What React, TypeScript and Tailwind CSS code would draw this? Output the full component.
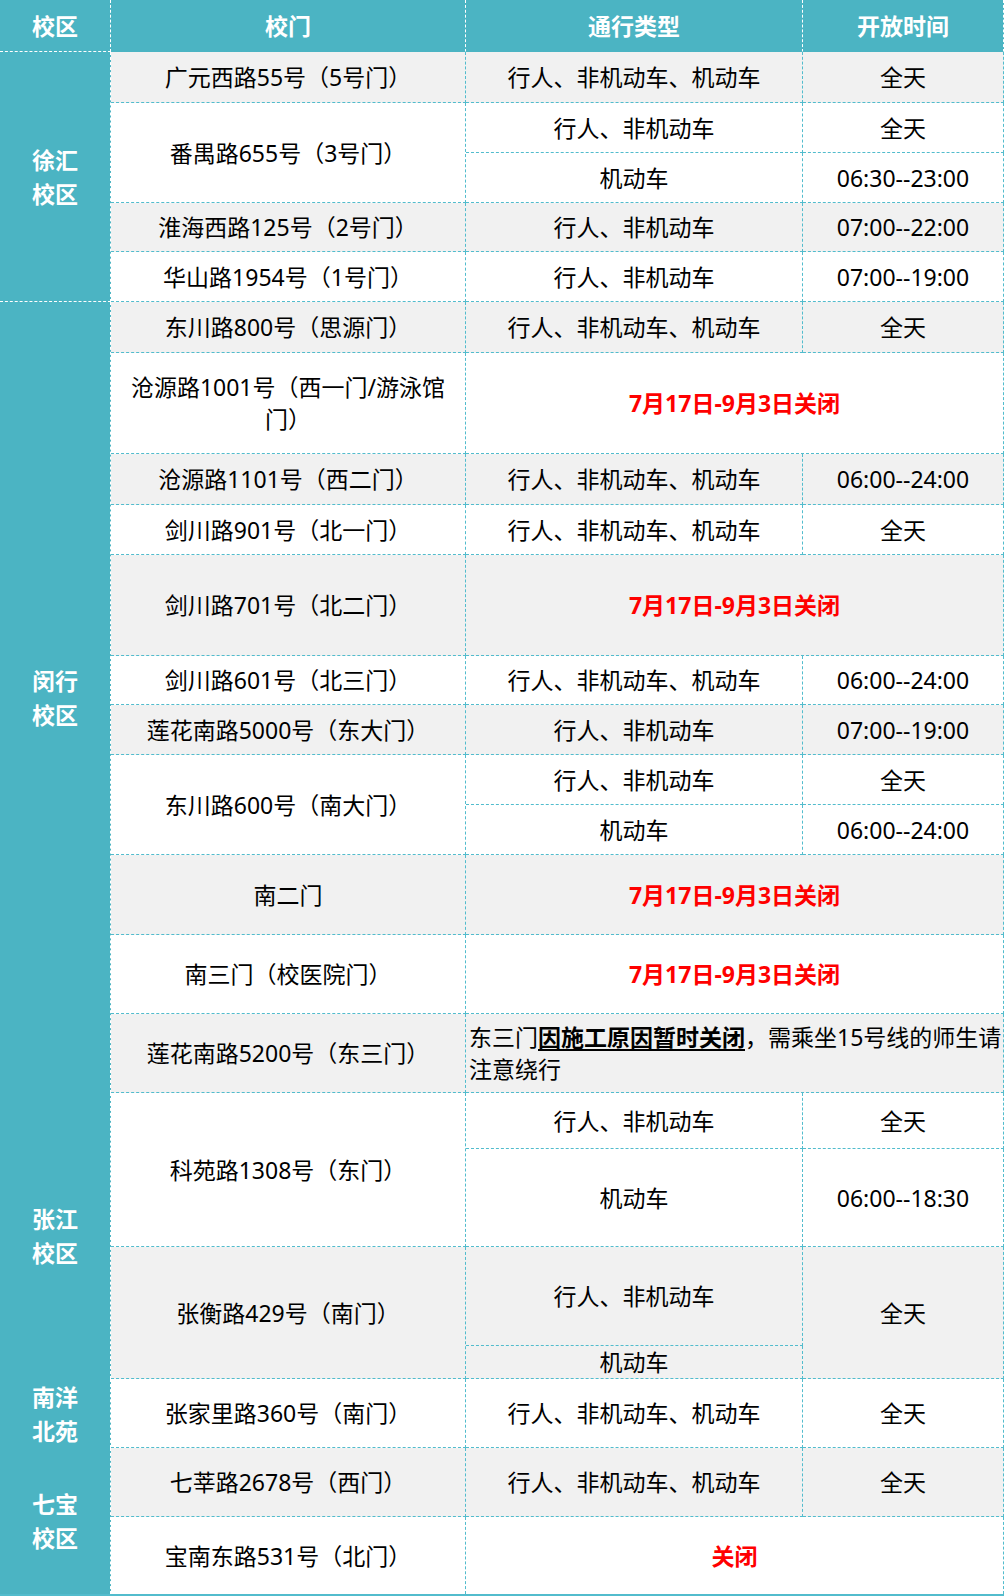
import React from "react";

const TD =
  "border-r border-b border-dashed border-[#52bccd] text-center align-middle px-1 text-[23px] leading-[32px]";
const GRAY = "bg-[#f1f1f1] text-black";
const WHITE = "bg-white text-black";
const GRAYR = "bg-[#f1f1f1] text-[#ff0000] font-bold";
const WHITER = "bg-white text-[#ff0000] font-bold";
const CAMPUS =
  "bg-[#4bb4c3] border-r border-dashed border-r-white text-center align-middle text-white font-bold text-[23px] leading-[34px]";
const TH =
  "bg-[#4bb4c3] text-white font-bold text-[23px] leading-[32px] text-center align-middle border-r border-b border-dashed border-r-white border-b-[#4bb4c3]";

export default function App() {
  return (
    <div className="w-[1004px] h-[1596px] bg-white font-['Noto_Sans','Noto_Sans_CJK_SC',sans-serif]">
      <table className="w-[1004px] table-fixed border-separate border-spacing-0 border-b-2 border-b-[#52bccd]">
        <colgroup>
          <col className="w-[111px]" />
          <col className="w-[355px]" />
          <col className="w-[337px]" />
          <col className="w-[201px]" />
        </colgroup>
        <thead>
          <tr className="h-[52px]">
            <th className={TH + " border-b-white"}>校区</th>
            <th className={TH}>校门</th>
            <th className={TH}>通行类型</th>
            <th className={TH + " border-r-[#52bccd]"}>开放时间</th>
          </tr>
        </thead>
        <tbody>
          {/* 徐汇 */}
          <tr className="h-[51px]">
            <td rowSpan={5} className={CAMPUS + " border-b border-b-white"}>
              徐汇
              <br />
              校区
            </td>
            <td className={TD + " " + GRAY}>广元西路55号（5号门）</td>
            <td className={TD + " " + GRAY}>行人、非机动车、机动车</td>
            <td className={TD + " " + GRAY}>全天</td>
          </tr>
          <tr className="h-[50px]">
            <td rowSpan={2} className={TD + " " + WHITE}>番禺路655号（3号门）</td>
            <td className={TD + " " + WHITE}>行人、非机动车</td>
            <td className={TD + " " + WHITE}>全天</td>
          </tr>
          <tr className="h-[50px]">
            <td className={TD + " " + WHITE}>机动车</td>
            <td className={TD + " " + WHITE}>06:30--23:00</td>
          </tr>
          <tr className="h-[49px]">
            <td className={TD + " " + GRAY}>淮海西路125号（2号门）</td>
            <td className={TD + " " + GRAY}>行人、非机动车</td>
            <td className={TD + " " + GRAY}>07:00--22:00</td>
          </tr>
          <tr className="h-[50px]">
            <td className={TD + " " + WHITE}>华山路1954号（1号门）</td>
            <td className={TD + " " + WHITE}>行人、非机动车</td>
            <td className={TD + " " + WHITE}>07:00--19:00</td>
          </tr>

          {/* 闵行 */}
          <tr className="h-[51px]">
            <td rowSpan={12} className={CAMPUS}>
              闵行
              <br />
              校区
            </td>
            <td className={TD + " " + GRAY}>东川路800号（思源门）</td>
            <td className={TD + " " + GRAY}>行人、非机动车、机动车</td>
            <td className={TD + " " + GRAY}>全天</td>
          </tr>
          <tr className="h-[101px]">
            <td className={TD + " " + WHITE}>
              沧源路1001号（西一门/游泳馆
              <br />
              门）
            </td>
            <td colSpan={2} className={TD + " " + WHITER}>
              7月17日-9月3日关闭
            </td>
          </tr>
          <tr className="h-[51px]">
            <td className={TD + " " + GRAY}>沧源路1101号（西二门）</td>
            <td className={TD + " " + GRAY}>行人、非机动车、机动车</td>
            <td className={TD + " " + GRAY}>06:00--24:00</td>
          </tr>
          <tr className="h-[50px]">
            <td className={TD + " " + WHITE}>剑川路901号（北一门）</td>
            <td className={TD + " " + WHITE}>行人、非机动车、机动车</td>
            <td className={TD + " " + WHITE}>全天</td>
          </tr>
          <tr className="h-[101px]">
            <td className={TD + " " + GRAY}>剑川路701号（北二门）</td>
            <td colSpan={2} className={TD + " " + GRAYR}>
              7月17日-9月3日关闭
            </td>
          </tr>
          <tr className="h-[49px]">
            <td className={TD + " " + WHITE}>剑川路601号（北三门）</td>
            <td className={TD + " " + WHITE}>行人、非机动车、机动车</td>
            <td className={TD + " " + WHITE}>06:00--24:00</td>
          </tr>
          <tr className="h-[50px]">
            <td className={TD + " " + GRAY}>莲花南路5000号（东大门）</td>
            <td className={TD + " " + GRAY}>行人、非机动车</td>
            <td className={TD + " " + GRAY}>07:00--19:00</td>
          </tr>
          <tr className="h-[50px]">
            <td rowSpan={2} className={TD + " " + WHITE}>东川路600号（南大门）</td>
            <td className={TD + " " + WHITE}>行人、非机动车</td>
            <td className={TD + " " + WHITE}>全天</td>
          </tr>
          <tr className="h-[50px]">
            <td className={TD + " " + WHITE}>机动车</td>
            <td className={TD + " " + WHITE}>06:00--24:00</td>
          </tr>
          <tr className="h-[80px]">
            <td className={TD + " " + GRAY}>南二门</td>
            <td colSpan={2} className={TD + " " + GRAYR}>
              7月17日-9月3日关闭
            </td>
          </tr>
          <tr className="h-[79px]">
            <td className={TD + " " + WHITE}>南三门（校医院门）</td>
            <td colSpan={2} className={TD + " " + WHITER}>
              7月17日-9月3日关闭
            </td>
          </tr>
          <tr className="h-[79px]">
            <td className={TD + " " + GRAY}>莲花南路5200号（东三门）</td>
            <td
              colSpan={2}
              className="border-r border-b border-dashed border-[#52bccd] bg-[#f1f1f1] text-left align-middle pl-[3px] pr-0 text-[23px] leading-[32px] text-black whitespace-nowrap overflow-visible"
            >
              东三门
              <span className="font-bold underline underline-offset-[3px]">因施工原因暂时关闭</span>
              ，需乘坐15号线的师生请
              <br />
              注意绕行
            </td>
          </tr>

          {/* 张江 */}
          <tr className="h-[56px]">
            <td rowSpan={4} className={CAMPUS}>
              张江
              <br />
              校区
            </td>
            <td rowSpan={2} className={TD + " " + WHITE}>科苑路1308号（东门）</td>
            <td className={TD + " " + WHITE}>行人、非机动车</td>
            <td className={TD + " " + WHITE}>全天</td>
          </tr>
          <tr className="h-[98px]">
            <td className={TD + " " + WHITE}>机动车</td>
            <td className={TD + " " + WHITE}>06:00--18:30</td>
          </tr>
          <tr className="h-[99px]">
            <td rowSpan={2} className={TD + " " + GRAY}>张衡路429号（南门）</td>
            <td className={TD + " " + GRAY}>行人、非机动车</td>
            <td rowSpan={2} className={TD + " " + GRAY}>全天</td>
          </tr>
          <tr className="h-[33px]">
            <td className={TD + " " + GRAY}>机动车</td>
          </tr>

          {/* 南洋北苑 */}
          <tr className="h-[69px]">
            <td className={CAMPUS}>
              南洋
              <br />
              北苑
            </td>
            <td className={TD + " " + WHITE}>张家里路360号（南门）</td>
            <td className={TD + " " + WHITE}>行人、非机动车、机动车</td>
            <td className={TD + " " + WHITE}>全天</td>
          </tr>

          {/* 七宝 */}
          <tr className="h-[69px]">
            <td rowSpan={2} className={CAMPUS}>
              七宝
              <br />
              校区
            </td>
            <td className={TD + " " + GRAY}>七莘路2678号（西门）</td>
            <td className={TD + " " + GRAY}>行人、非机动车、机动车</td>
            <td className={TD + " " + GRAY}>全天</td>
          </tr>
          <tr className="h-[77px]">
            <td className={TD + " " + WHITE + " border-b-0"}>宝南东路531号（北门）</td>
            <td colSpan={2} className={TD + " " + WHITER + " border-b-0"}>
              关闭
            </td>
          </tr>
        </tbody>
      </table>
    </div>
  );
}
